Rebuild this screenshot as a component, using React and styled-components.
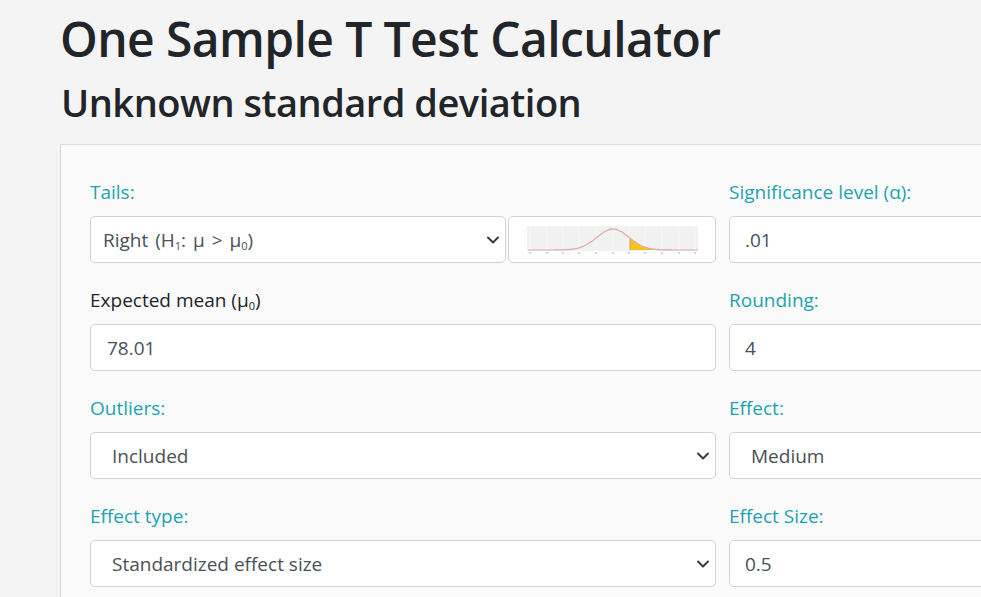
import React from "react"
import styled, { createGlobalStyle } from "styled-components"

const GlobalStyle = createGlobalStyle`
    html, body {
        margin: 0;
        padding: 0;
        background: #f4f4f4;
        overflow: hidden;
        font-family: "Open Sans", "Noto Sans", sans-serif;
    }
`
const Page = styled.div`
    padding-left: 60px;
    width: 1100px;
`
const Title = styled.h1`
    margin: 0;
    padding-top: 9px;
    font-size: 48px;
    line-height: 60px;
    font-weight: 600;
    color: #212529;
    letter-spacing: -0.6px;
`
const Subtitle = styled.h2`
    margin: 0;
    padding-left: 1px;
    font-size: 38px;
    line-height: 66px;
    font-weight: 600;
    color: #212529;
    letter-spacing: -0.5px;
`
const Card = styled.div`
    margin-top: 9px;
    background: #fafafa;
    border: 1px solid #d3dbe3;
    padding: 34px 0 0 29px;
    height: 600px;
`
const Grid = styled.div`
    display: grid;
    grid-template-columns: 626px 300px;
    column-gap: 13px;
`
const Group = styled.div`
    margin-bottom: 24px;
`
const Label = styled.div`
    font-size: 19px;
    line-height: 27px;
    margin-bottom: 10px;
    color: ${p => (p.$plain ? "#212529" : "#1ea3ae")};
`
const Row = styled.div`
    display: flex;
    gap: 2px;
`
const Field = styled.div`
    position: relative;
    box-sizing: border-box;
    flex: 1;
    display: flex;
    align-items: center;
    height: 47px;
    padding-left: ${p => p.$pad}px;
    background: #fff;
    border: 1px solid #ced4da;
    border-radius: 5px;
    font-size: 19px;
    color: #495057;
`
const Value = styled.span`
    white-space: nowrap;
    word-spacing: ${p => p.$wide ? "2px" : "0"};
`
const Chevron = styled.svg`
    position: absolute;
    right: 5px;
    top: 18px;
`
const Sub = styled.sub`
    font-size: 11px;
    vertical-align: -3px;
    line-height: 0;
`
const ChartBox = styled.div`
    box-sizing: border-box;
    width: 208px;
    height: 47px;
    background: #fff;
    border: 1px solid #ced4da;
    border-radius: 5px;
    overflow: hidden;
`

const Select = ({ pad, wide, children }) => (
    <Field $pad={pad}>
        <Value $wide={wide}>{children}</Value>
        <Chevron width="14" height="10" viewBox="0 0 14 10">
            <path d="M2 2.5 L7 7.5 L12 2.5" fill="none" stroke="#343a40" strokeWidth="1.9" strokeLinecap="round" strokeLinejoin="round" />
        </Chevron>
    </Field>
)

// small preview of the right tail under the normal curve
const TailChart = () => {
    const mean = 105, sd = 16, base = 34, peak = 21
    const y = x => base - peak * Math.exp(-0.5 * ((x - mean) / sd) ** 2)
    const curve = []
    for (let x = 20; x <= 190; x += 1) curve.push(`${x},${y(x).toFixed(2)}`)
    const tail = [`122,${base}`]
    for (let x = 122; x <= 190; x += 1) tail.push(`${x},${y(x).toFixed(2)}`)
    tail.push(`190,${base}`)
    const ticks = [22, 39, 55, 71, 88, 105, 121, 137, 154, 171, 187]
    return (
        <svg width="206" height="45" viewBox="1 1 206 45">
            <rect x="19" y="10" width="171" height="25" fill="#f1f1f1" />
            {ticks.map(t => <line key={"g" + t} x1={t} y1="10" x2={t} y2="35" stroke="#f8f8f8" strokeWidth="1" />)}
            <polygon points={tail.join(" ")} fill="#f4c41c" />
            <line x1="122" y1={base} x2="122" y2={y(122)} stroke="#c9a06a" strokeWidth="1" />
            <polyline points={curve.join(" ")} fill="none" stroke="#e0a9a9" strokeWidth="1.2" />
            {ticks.map(t => <line key={t} x1={t} y1="36" x2={t} y2="38" stroke="#b5b5b5" strokeWidth="1.2" />)}
        </svg>
    )
}

export default function App() {
    return (
        <>
            <GlobalStyle />
            <Page>
                <Title>One Sample T Test Calculator</Title>
                <Subtitle>Unknown standard deviation</Subtitle>
                <Card>
                    <Grid>
                        <Group>
                            <Label>Tails:</Label>
                            <Row>
                                <Select pad={12} wide>Right (H<Sub>1</Sub>: μ &gt; μ<Sub>0</Sub>)</Select>
                                <ChartBox><TailChart /></ChartBox>
                            </Row>
                        </Group>
                        <Group>
                            <Label>Significance level (α):</Label>
                            <Field $pad={15}><Value>.01</Value></Field>
                        </Group>
                        <Group>
                            <Label $plain>Expected mean (μ<Sub>0</Sub>)</Label>
                            <Field $pad={16}><Value>78.01</Value></Field>
                        </Group>
                        <Group>
                            <Label>Rounding:</Label>
                            <Field $pad={15}><Value>4</Value></Field>
                        </Group>
                        <Group>
                            <Label>Outliers:</Label>
                            <Select pad={21}>Included</Select>
                        </Group>
                        <Group>
                            <Label>Effect:</Label>
                            <Field $pad={21}><Value>Medium</Value></Field>
                        </Group>
                        <Group>
                            <Label>Effect type:</Label>
                            <Select pad={21}>Standardized effect size</Select>
                        </Group>
                        <Group>
                            <Label>Effect Size:</Label>
                            <Field $pad={15}><Value>0.5</Value></Field>
                        </Group>
                    </Grid>
                </Card>
            </Page>
        </>
    )
}
